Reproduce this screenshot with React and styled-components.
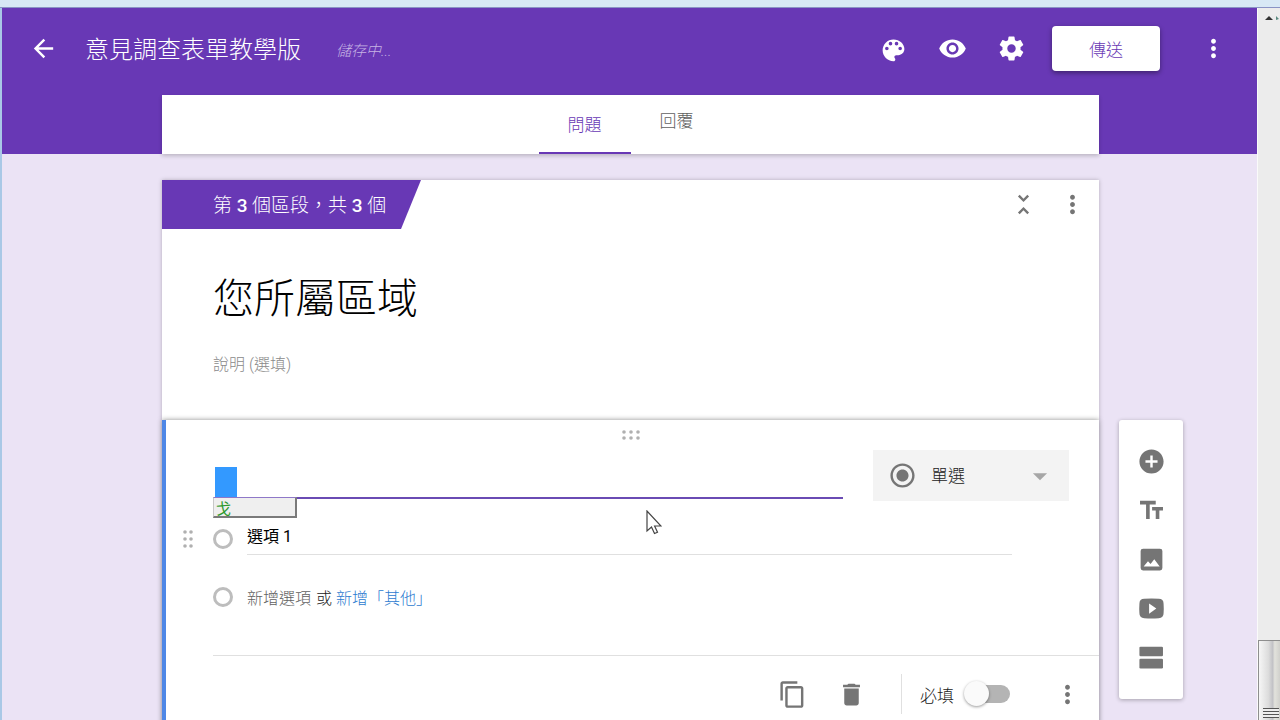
import React, { useState } from "react";
import styled, { createGlobalStyle } from "styled-components";
import {
  MdAddCircle,
  MdArrowBack,
  MdArrowDropDown,
  MdContentCopy,
  MdDelete,
  MdMoreVert,
  MdRadioButtonChecked,
  MdRemoveRedEye,
  MdTextFields,
  MdUnfoldLess,
} from "react-icons/md";

const GlobalStyle = createGlobalStyle`
  :root {
    --purple: #6838b5;
    --lavender: #ebe3f5;
    --gray: #757575;
    --line: #e0e0e0;
  }
  * {
    box-sizing: border-box;
  }
  body {
    margin: 0;
    overflow: hidden;
    font-family: Roboto, "Noto Sans CJK TC", sans-serif;
    font-size: 16px;
    font-weight: 300;
    color: #212121;
  }
  button,
  input,
  select {
    font: inherit;
    color: inherit;
    border: 0;
    padding: 0;
    margin: 0;
    background: none;
    outline: none;
  }
  button {
    cursor: pointer;
  }
`;

const Window = styled.div`
  display: flex;
  flex-direction: column;
  height: 100vh;
`;

const WindowEdge = styled.div`
  flex: none;
  height: 8px;
  background-color: #d8e8f5;
  border-bottom: 1px solid #8a93c4;
`;

const WindowBody = styled.div`
  flex: 1;
  display: flex;
  min-height: 0;
`;

const Page = styled.div`
  flex: 1;
  min-width: 0;
  overflow: hidden;
  background-color: var(--lavender);
  border-left: 2px solid #a9c8e6;
`;

const Scrollbar = styled.div`
  flex: none;
  width: 23px;
  display: flex;
  flex-direction: column;
  justify-content: space-between;
  align-items: flex-end;
  background-color: #ececec;
  border-left: 1px solid #fafafa;
  .arrow {
    width: 100%;
    height: 20px;
    display: block;
  }
`;

const Thumb = styled.div`
  width: 100%;
  height: 80px;
  border: 1px solid #8e8e8e;
  border-width: 1px 0 0 1px;
  background: linear-gradient(to right, #f6f6f6, #dcdcdc 45%, #c2c2c6 65%, #e2e2dc 75%, #d0d0cc);
  display: flex;
  align-items: flex-end;
  padding: 0 0 2px 4px;
`;

const ThumbGrip = styled.div`
  width: 16px;
  height: 10px;
  background: repeating-linear-gradient(#555 0 1px, #eee 1px 3px);
`;

const Header = styled.header`
  background-color: var(--purple);
  color: white;
`;

const Toolbar = styled.div`
  display: flex;
  align-items: center;
  padding: 18px 29px 24px 27px;
`;

const ToolbarActions = styled.div`
  display: flex;
  align-items: center;
  gap: 30px;
  margin-left: auto;
`;

const IconButton = styled.button`
  display: flex;
  width: 29px;
  height: 29px;
  color: ${(props) => props.$color || "var(--gray)"};
  svg {
    width: 29px;
    height: 29px;
  }
`;

const FormName = styled.input`
  width: 220px;
  margin: 0 31px 0 27px;
  padding-top: 2px;
  font-size: 24px;
  line-height: 36px;
`;

const SaveStatus = styled.span`
  padding-top: 2px;
  font-size: 15px;
  font-style: italic;
  color: #c6b3e4;
`;

const SendButton = styled.button`
  width: 108px;
  height: 45px;
  margin: 0 39px 0 26px;
  border-radius: 4px;
  background-color: white;
  color: var(--purple);
  font-size: 17px;
  box-shadow: 0 2px 5px rgba(0, 0, 0, 0.4);
`;

const Columns = styled.div`
  display: grid;
  grid-template-columns: minmax(0, 1fr) minmax(0, 937px) minmax(0, 1fr);
  padding-left: 2px;
`;

const Tabs = styled.nav`
  grid-column: 2;
  display: flex;
  justify-content: center;
  height: 59px;
  background-color: white;
  box-shadow: 0 2px 4px rgba(0, 0, 0, 0.2);
`;

const Tab = styled.button`
  width: 92px;
  font-size: 17px;
  color: ${(props) => (props.$active ? "var(--purple)" : "#616161")};
  border-bottom: 2px solid
    ${(props) => (props.$active ? "var(--purple)" : "transparent")};
  padding-bottom: ${(props) => (props.$active ? "0" : "8px")};
`;

const Main = styled(Columns)`
  padding-top: 26px;
`;

const SectionCard = styled.section`
  grid-column: 2;
  background-color: white;
  box-shadow: 0 0 4px rgba(0, 0, 0, 0.25);
  padding-bottom: 44px;
`;

const SectionTop = styled.div`
  display: flex;
  align-items: center;
  gap: 20px;
  padding-right: 12px;
`;

const Ribbon = styled.div`
  width: 259px;
  height: 49px;
  margin-right: auto;
  padding: 2px 0 0 51px;
  line-height: 48px;
  font-size: 19px;
  color: white;
  background-color: var(--purple);
  clip-path: polygon(0 0, 100% 0, 239px 100%, 0 100%);
  white-space: nowrap;
  b {
    font-weight: 500;
  }
`;

const SectionFields = styled.div`
  display: flex;
  flex-direction: column;
  gap: 27px;
  padding: 36px 51px 0;
`;

const SectionTitle = styled.input`
  width: 100%;
  height: 60px;
  font-size: 41px;
  color: black;
`;

const Description = styled.input`
  width: 100%;
  height: 24px;
  &::placeholder {
    color: #8a8a8a;
    opacity: 1;
  }
`;

const QuestionCard = styled.section`
  grid-column: 2;
  position: relative;
  background-color: white;
  border-left: 4px solid #4e87e6;
  box-shadow: 0 0 5px rgba(0, 0, 0, 0.45);
`;

const Grip = styled.svg`
  display: block;
  fill: #b0b0b0;
  cursor: move;
`;

const GripRow = styled.div`
  display: flex;
  justify-content: center;
  padding: 10px 4px 10px 0;
`;

const QuestionRow = styled.div`
  display: flex;
  align-items: flex-start;
  gap: 30px;
  padding: 0 30px 0 47px;
`;

const QuestionField = styled.div`
  flex: 1;
  position: relative;
  display: flex;
  align-items: flex-end;
  height: 49px;
  padding-left: 2px;
  border-bottom: 2px solid #6a4bb4;
  input {
    flex: 1;
    height: 30px;
  }
`;

const Composing = styled.span`
  width: 22px;
  height: 30px;
  background-color: #3399ff;
`;

const ImeBox = styled.div`
  position: absolute;
  top: 100%;
  left: 0;
  width: 84px;
  height: 21px;
  padding-left: 2px;
  font-size: 15px;
  font-weight: 400;
  line-height: 22px;
  color: #2e9a2e;
  background-color: #efefef;
  border: 1px solid #c8c8c8;
  border-width: 1px 2px 2px 1px;
  border-top-color: #8f78c8;
  border-right-color: #7a7a7a;
  border-bottom-color: #7a7a7a;
`;

const TypePicker = styled.div`
  display: grid;
  grid-template-columns: 58px 1fr 58px;
  align-items: center;
  justify-items: center;
  width: 196px;
  height: 51px;
  background-color: #f3f3f3;
  select {
    grid-area: 1 / 1 / 2 / 4;
    width: 100%;
    height: 100%;
    padding-left: 58px;
    font-size: 17px;
    appearance: none;
  }
  svg {
    grid-row: 1;
    width: 29px;
    height: 29px;
    pointer-events: none;
  }
  svg:first-of-type {
    grid-column: 1;
    color: var(--gray);
  }
  svg:last-of-type {
    grid-column: 3;
    width: 34px;
    height: 34px;
    color: #a6a6a6;
  }
`;

const Options = styled.div`
  display: flex;
  flex-direction: column;
  gap: 18px;
  padding: 18px 87px 38px 17px;
`;

const Option = styled.div`
  display: flex;
  align-items: center;
  height: 40px;
  padding-left: ${(props) => (props.$movable ? "0" : "30px")};
  input[type="radio"] {
    appearance: none;
    width: 20px;
    height: 20px;
    margin-right: 14px;
    border: 3px solid #bdbdbd;
    border-radius: 50%;
  }
  ${Grip} {
    margin-right: 20px;
  }
`;

const OptionText = styled.input`
  flex: 1;
  align-self: flex-start;
  height: 36px;
  padding-bottom: 4px;
  border-bottom: 1px solid var(--line);
  color: black;
  font-weight: 400;
`;

const AddOption = styled.button`
  color: #616161;
  margin-right: 5px;
`;

const AddOther = styled.a`
  margin-left: 4px;
  color: #2d7bd0;
  text-decoration: none;
`;

const CardFooter = styled.footer`
  display: flex;
  align-items: center;
  justify-content: flex-end;
  gap: 30px;
  height: 77px;
  margin-left: 47px;
  padding-right: 17px;
  border-top: 1px solid var(--line);
`;

const Required = styled.label`
  display: flex;
  align-items: center;
  height: 40px;
  margin: 0 13px 0 5px;
  padding-left: 18px;
  border-left: 1px solid var(--line);
  font-size: 17px;
`;

const Switch = styled.input`
  appearance: none;
  width: 38px;
  height: 18px;
  margin-left: 18px;
  border-radius: 9px;
  background-color: #b4b4b4;
  &::before {
    content: "";
    display: block;
    width: 25px;
    height: 25px;
    margin: -4px 0 0 -8px;
    border-radius: 50%;
    background-color: #fafafa;
    box-shadow: 0 1px 3px rgba(0, 0, 0, 0.4);
  }
  &:checked {
    background-color: #b39ddb;
  }
  &:checked::before {
    margin-left: 21px;
    background-color: var(--purple);
  }
`;

const SideBar = styled.aside`
  grid-column: 3;
  align-self: flex-start;
  display: flex;
  flex-direction: column;
  align-items: center;
  gap: 20px;
  width: 64px;
  margin-left: 20px;
  padding: 27px 0;
  border-radius: 3px;
  background-color: white;
  box-shadow: 0 1px 4px rgba(0, 0, 0, 0.3);
`;

const Pointer = styled.svg`
  position: absolute;
  top: 90px;
  left: 480px;
  pointer-events: none;
`;

const GripDots = ({ cols, rows, gapX, gapY }) => {
  const dots = [];
  for (let r = 0; r < rows; r++) {
    for (let c = 0; c < cols; c++) {
      dots.push(
        <circle key={`${r}-${c}`} cx={2 + c * gapX} cy={2 + r * gapY} r="1.8" />
      );
    }
  }
  return (
    <Grip width={4 + (cols - 1) * gapX} height={4 + (rows - 1) * gapY}>
      {dots}
    </Grip>
  );
};

const PaletteIcon = () => (
  <svg viewBox="0 -1.5 24 24" fill="currentColor">
    <path
      fillRule="evenodd"
      d="M12 3c-4.97 0-9 4.03-9 9s4.03 9 9 9c.83 0 1.5-.67 1.5-1.5 0-.39-.15-.74-.39-1.01-.23-.26-.38-.61-.38-.99 0-.83.67-1.5 1.5-1.5H16c2.76 0 5-2.24 5-5 0-4.42-4.03-8-9-8zM6.5 12a1.5 1.5 0 1 1 0-3 1.5 1.5 0 0 1 0 3zM9.5 8a1.5 1.5 0 1 1 0-3 1.5 1.5 0 0 1 0 3zM14.5 8a1.5 1.5 0 1 1 0-3 1.5 1.5 0 0 1 0 3zM17.5 12a1.5 1.5 0 1 1 0-3 1.5 1.5 0 0 1 0 3z"
    />
  </svg>
);

const GearIcon = () => (
  <svg viewBox="0 0 24 24" fill="currentColor">
    <path d="M19.43 12.98c.04-.32.07-.64.07-.98s-.03-.66-.07-.98l2.11-1.65c.19-.15.24-.42.12-.64l-2-3.46c-.12-.22-.39-.3-.61-.22l-2.49 1c-.52-.4-1.08-.73-1.69-.98l-.38-2.65C14.46 2.18 14.25 2 14 2h-4c-.25 0-.46.18-.49.42l-.38 2.65c-.61.25-1.17.59-1.69.98l-2.49-1c-.23-.09-.49 0-.61.22l-2 3.46c-.13.22-.07.49.12.64l2.11 1.65c-.04.32-.07.65-.07.98s.03.66.07.98l-2.11 1.65c-.19.15-.24.42-.12.64l2 3.46c.12.22.39.3.61.22l2.49-1c.52.4 1.08.73 1.69.98l.38 2.65c.03.24.24.42.49.42h4c.25 0 .46-.18.49-.42l.38-2.65c.61-.25 1.17-.59 1.69-.98l2.49 1c.23.09.49 0 .61-.22l2-3.46c.12-.22.07-.49-.12-.64l-2.11-1.65zM12 15.5c-1.93 0-3.5-1.57-3.5-3.5s1.57-3.5 3.5-3.5 3.5 1.57 3.5 3.5-1.57 3.5-3.5 3.5z" />
  </svg>
);

const PhotoIcon = () => (
  <svg viewBox="0 0 24 24" fill="currentColor">
    <path
      fillRule="evenodd"
      d="M5 3h14a2 2 0 0 1 2 2v14a2 2 0 0 1-2 2H5a2 2 0 0 1-2-2V5a2 2 0 0 1 2-2zm.5 14.8h13.3l-4.5-6-3.1 4-2.1-2.3z"
    />
  </svg>
);

const VideoIcon = () => (
  <svg viewBox="0 0 24 24" fill="currentColor">
    <path
      fillRule="evenodd"
      d="M6 4Q12 3.6 18 4Q22 4 22 8Q22.3 12 22 16Q22 20 18 20Q12 20.4 6 20Q2 20 2 16Q1.7 12 2 8Q2 4 6 4zM10 7.8v8.600l6-4.3z"
    />
  </svg>
);

const SectionIcon = () => (
  <svg viewBox="0 0 24 24" fill="currentColor">
    <rect x="2" y="3" width="19.5" height="8" rx="1" />
    <rect x="2" y="13" width="19.5" height="8" rx="1" />
  </svg>
);

const tools = [
  { label: "新增問題", Icon: MdAddCircle },
  { label: "新增標題與說明", Icon: MdTextFields },
  { label: "新增圖片", Icon: PhotoIcon },
  { label: "新增影片", Icon: VideoIcon },
  { label: "新增區段", Icon: SectionIcon },
];

export default function App() {
  const [name, setName] = useState("意見調查表單教學版");
  const [title, setTitle] = useState("您所屬區域");
  const [option, setOption] = useState("選項 1");
  const [required, setRequired] = useState(false);

  return (
    <Window>
      <GlobalStyle />
      <WindowEdge />
      <WindowBody>
        <Page>
          <Header>
            <Toolbar>
              <IconButton $color="white" aria-label="返回">
                <MdArrowBack />
              </IconButton>
              <FormName
                aria-label="表單名稱"
                value={name}
                onChange={(e) => setName(e.target.value)}
              />
              <SaveStatus>儲存中...</SaveStatus>
              <ToolbarActions>
                <IconButton $color="white" aria-label="調色盤">
                  <PaletteIcon />
                </IconButton>
                <IconButton $color="white" aria-label="預覽">
                  <MdRemoveRedEye />
                </IconButton>
                <IconButton $color="white" aria-label="設定">
                  <GearIcon />
                </IconButton>
              </ToolbarActions>
              <SendButton>傳送</SendButton>
              <IconButton $color="white" aria-label="更多">
                <MdMoreVert />
              </IconButton>
            </Toolbar>
            <Columns>
              <Tabs>
                <Tab $active>問題</Tab>
                <Tab>回覆</Tab>
              </Tabs>
            </Columns>
          </Header>

          <Main as="main">
            <SectionCard>
              <SectionTop>
                <Ribbon>
                  第 <b>3</b> 個區段，共 <b>3</b> 個
                </Ribbon>
                <IconButton aria-label="收合區段">
                  <MdUnfoldLess />
                </IconButton>
                <IconButton aria-label="更多">
                  <MdMoreVert />
                </IconButton>
              </SectionTop>
              <SectionFields>
                <SectionTitle
                  aria-label="區段標題"
                  value={title}
                  onChange={(e) => setTitle(e.target.value)}
                />
                <Description aria-label="說明" placeholder="說明 (選填)" />
              </SectionFields>
            </SectionCard>

            <QuestionCard>
              <GripRow>
                <GripDots cols={3} rows={2} gapX={7} gapY={6} />
              </GripRow>
              <QuestionRow>
                <QuestionField>
                  <Composing />
                  <input type="text" aria-label="問題" />
                  <ImeBox>戈</ImeBox>
                </QuestionField>
                <TypePicker>
                  <select aria-label="題型">
                    <option>單選</option>
                    <option>核取方塊</option>
                    <option>下拉式選單</option>
                  </select>
                  <MdRadioButtonChecked />
                  <MdArrowDropDown />
                </TypePicker>
              </QuestionRow>
              <Options>
                <Option $movable>
                  <GripDots cols={2} rows={3} gapX={6} gapY={7} />
                  <input type="radio" name="option" aria-label={option} />
                  <OptionText
                    aria-label="選項"
                    value={option}
                    onChange={(e) => setOption(e.target.value)}
                  />
                </Option>
                <Option>
                  <input type="radio" name="option" aria-label="新增選項" />
                  <AddOption>新增選項</AddOption>
                  或
                  <AddOther href="#other">新增「其他」</AddOther>
                </Option>
              </Options>
              <CardFooter>
                <IconButton aria-label="複製">
                  <MdContentCopy />
                </IconButton>
                <IconButton aria-label="刪除">
                  <MdDelete />
                </IconButton>
                <Required>
                  必填
                  <Switch
                    type="checkbox"
                    checked={required}
                    onChange={(e) => setRequired(e.target.checked)}
                  />
                </Required>
                <IconButton aria-label="更多">
                  <MdMoreVert />
                </IconButton>
              </CardFooter>
              <Pointer width="16" height="25" viewBox="0 0 16 25">
                <path
                  d="M1 1v20l4.5-4 3 6.500 3-1.3-2.9-6.2H15z"
                  fill="white"
                  stroke="#444"
                  strokeWidth="1.2"
                />
              </Pointer>
            </QuestionCard>

            <SideBar>
              {tools.map(({ label, Icon }) => (
                <IconButton key={label} aria-label={label}>
                  <Icon />
                </IconButton>
              ))}
            </SideBar>
          </Main>
        </Page>
        <Scrollbar>
          <svg className="arrow" viewBox="0 0 22 20">
            <path d="M7 12l4-4 4 4z" fill="#333" />
            <path d="M18 8v4l3-1z" fill="#5a8a80" />
          </svg>
          <Thumb>
            <ThumbGrip />
          </Thumb>
        </Scrollbar>
      </WindowBody>
    </Window>
  );
}
